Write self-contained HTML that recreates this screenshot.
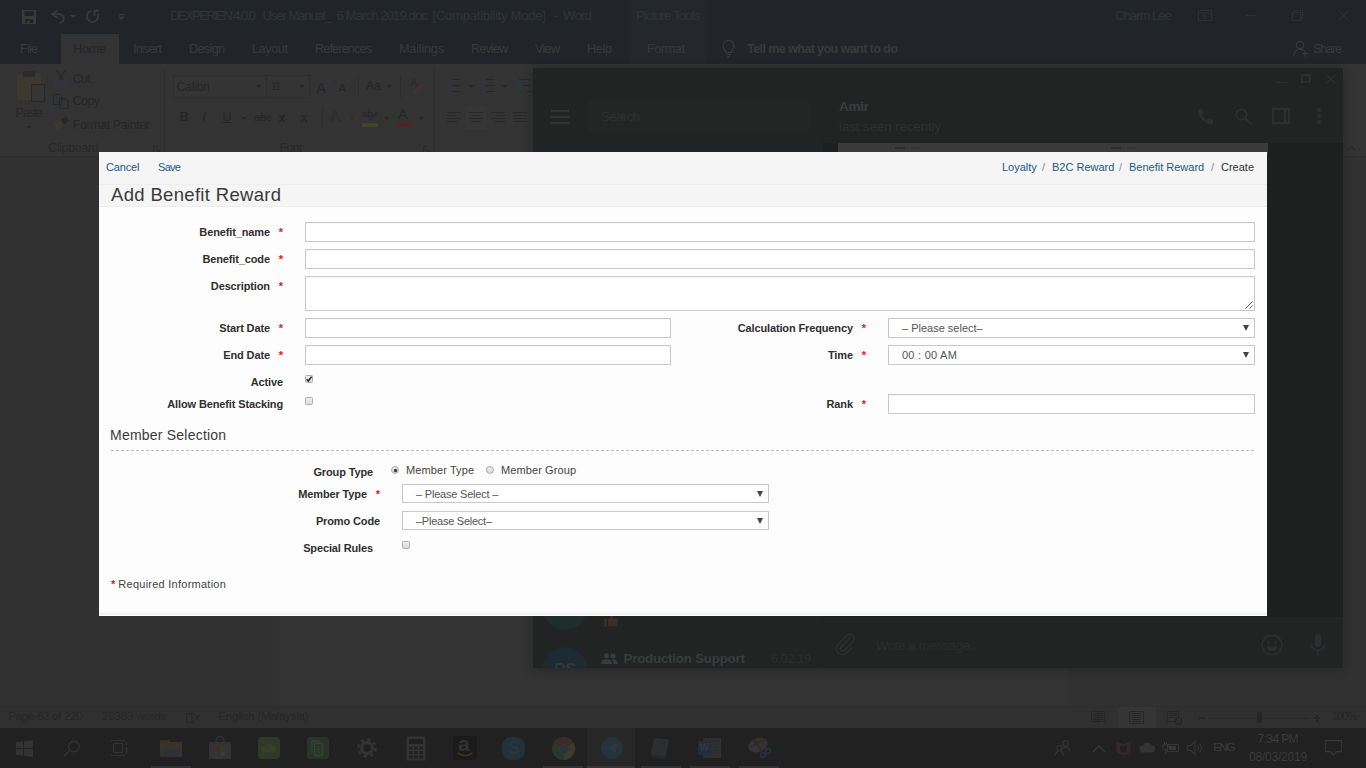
<!DOCTYPE html>
<html lang="en">
<head>
<meta charset="utf-8">
<title>Add Benefit Reward</title>
<style>
*{box-sizing:border-box;margin:0;padding:0}
html,body{width:1366px;height:768px;overflow:hidden;background:#333;font-family:"Liberation Sans",sans-serif}
.abs,.abs *{position:absolute}
#desk{position:absolute;left:0;top:0;width:1366px;height:768px;overflow:hidden;background:#333}
.t{white-space:nowrap;line-height:1}
/* ---------- Word (dimmed) ---------- */
#wtitle{left:0;top:0;width:1366px;height:64px;background:#21252a}
#wtitle .t{color:#373b42;font-size:12.5px}
#hometab{left:61px;top:34px;width:58px;height:31px;background:#333}
#pictools{left:629px;top:0;width:77px;height:64px;background:#24282d}
#ribbon{left:0;top:64px;width:1366px;height:93px;background:#333;border-bottom:1px solid #2e2e2e}
#ribbon .t{color:#262626;font-size:12.5px}
#ribbon .sep{width:1px;background:#2d2d2d;top:4px;height:86px}
#docarea{left:0;top:157px;width:1366px;height:549px;background:#313131}
#wpage{left:278px;top:157px;width:792px;height:549px;background:#333;border-left:1px solid #303030;border-right:1px solid #303030}
#status{left:0;top:706px;width:1366px;height:22px;background:#303030;border-top:1px solid #2e2e2e}
#status .t{color:#262626;font-size:11.5px;top:5px}
#taskbar{left:0;top:728px;width:1366px;height:40px;background:#212121}
#taskbar .t{color:#3a3a3a;font-size:12px}
/* ---------- Telegram (dimmed) ---------- */
#tg{left:533px;top:68px;width:810px;height:600px;overflow:hidden;background:#212423;box-shadow:0 2px 10px rgba(0,0,0,.25)}
#tgchat{left:289px;top:0;width:521px;height:600px;background:#1e2020;border-left:1px solid #1f2121}
#tghead{left:290px;top:0;width:520px;height:75px;background:#212423}
#tg .t{color:#323536}
/* ---------- Modal ---------- */
#modal{position:absolute;left:99px;top:152px;width:1168px;height:464px;background:#fdfdfd;color:#333;font-size:11px}
#mhead{position:absolute;left:0;top:0;width:1168px;height:55px;background:#f5f5f5;border-bottom:1px solid #ececec}
#mhead .line{position:absolute;left:0;top:32px;width:1168px;height:1px;background:#fafafa;border-top:1px solid #eee}
#mfoot{position:absolute;left:0;bottom:1px;width:1168px;height:4px;background:linear-gradient(#fbfbfb,#f0f0f0)}
#modal a{color:#1c5a85;text-decoration:none}
#modal .t{position:absolute}
.lbl{position:absolute;font-weight:bold;font-size:11px;color:#2f2f2f;text-align:right;white-space:nowrap;line-height:13px;letter-spacing:-0.13px}
.lbl i{font-style:normal;color:#e8141c;font-weight:bold;margin-left:6px}
.inp{position:absolute;background:#fff;border:1px solid #c9c9c9;box-shadow:inset 0 1px 1px rgba(0,0,0,.04)}
.sel{position:absolute;background:#fff;border:1px solid #c9c9c9;color:#555;font-size:11px;line-height:19px;white-space:nowrap}
.sel:after{content:"";position:absolute;right:5px;top:6px;border-left:3.5px solid transparent;border-right:3.5px solid transparent;border-top:6px solid #444}
.cb{position:absolute;width:8px;height:8px;border:1px solid #adadad;border-radius:1.5px;background:linear-gradient(#efefef,#dadada)}
.rd{position:absolute;width:8px;height:8px;border:1px solid #aaa;border-radius:50%;background:linear-gradient(#ececec,#d9d9d9)}
</style>
</head>
<body>
<div id="desk">

<!-- ================= WORD ================= -->
<div id="wtitle" class="abs">
  <div id="pictools"></div>
  <div id="hometab"></div>
  <!--QAT-->
  <svg style="left:22px;top:10px" width="14" height="14" viewBox="0 0 14 14"><path d="M0 0h14v14h-14z" fill="#3a3a3b"/><path d="M2.200 1.200h9.700v3.700l-1 1h-7.700l-1-1z M3.100 8.900h7.900v4h-3.500v-1.800h-2.200v1.800h-2.200z" fill="#21252a"/></svg>
  <svg style="left:50px;top:9px" width="17" height="16" viewBox="0 0 17 16"><path d="M7.700 1.300L1.800 5.200L7.700 9.100 M2 5.200H9.700a4.300 4.300 0 0 1 1.200 8.300L9 14" fill="none" stroke="#3a3a3b" stroke-width="1.800"/></svg>
  <svg style="left:70px;top:15px" width="6" height="3" viewBox="0 0 6 3"><path d="M0 0h6l-3 3z" fill="#3a3a3b"/></svg>
  <svg style="left:85px;top:9px" width="16" height="16" viewBox="0 0 16 16"><path d="M12.600 5.200A5.600 5.600 0 1 1 6.300 1.900" fill="none" stroke="#3a3a3b" stroke-width="1.800"/><path d="M9.500 6.800V1.700H14" fill="none" stroke="#3a3a3b" stroke-width="1.800"/></svg>
  <svg style="left:118px;top:14px" width="7" height="7" viewBox="0 0 7 7"><path d="M0.500 0.700h6" stroke="#3a3a3b" stroke-width="1.200"/><path d="M0 2.800h7l-3.500 3.200z" fill="#3a3a3b"/></svg>
  <!--/QAT-->
  <!--TITLE-->
  <span class="t" style="left:170.0px;top:9.4px;font-size:13.2px;color:#30343a;letter-spacing:-1.67px;">DEXPERIEN 4.0.0</span>
  <span class="t" style="left:262.5px;top:9.4px;font-size:13.2px;color:#30343a;letter-spacing:-1.15px;">User Manual_</span>
  <span class="t" style="left:336.5px;top:9.4px;font-size:13.2px;color:#30343a;letter-spacing:-0.94px;">6 March 2019.doc</span>
  <span class="t" style="left:432.5px;top:9.4px;font-size:13.2px;color:#30343a;letter-spacing:-0.32px;">[Compatibility Mode]</span>
  <span class="t" style="left:554.0px;top:9.4px;font-size:13.2px;color:#30343a;letter-spacing:-0.40px;">-</span>
  <span class="t" style="left:563.0px;top:9.4px;font-size:13.2px;color:#30343a;letter-spacing:-0.77px;">Word</span>
  <span class="t" style="left:636.0px;top:9.4px;font-size:13.2px;color:#30343a;letter-spacing:-0.94px;">Picture Tools</span>
  <span class="t" style="left:1115.0px;top:9.4px;font-size:13.2px;color:#30343a;letter-spacing:-1.04px;">Charm Lee</span>
  <svg style="left:1198px;top:10px" width="14" height="11" viewBox="0 0 14 11"><path d="M.5 .5h13v10H.5z M.5 3h13 M7 9V5 M5.3 6.5L7 4.8l1.7 1.7" fill="none" stroke="#2d3137" stroke-width="1"/></svg>
  <div style="left:1246px;top:15px;width:10px;height:1px;background:#2d3137"></div>
  <svg style="left:1292px;top:10px" width="11" height="11" viewBox="0 0 11 11"><path d="M.5 2.5h8v8h-8z M2.5 2.5v-2h8v8h-2" fill="none" stroke="#2d3137" stroke-width="1"/></svg>
  <svg style="left:1338px;top:10px" width="11" height="11" viewBox="0 0 11 11"><path d="M.5 .5l10 10 M10.5 .5l-10 10" fill="none" stroke="#2d3137" stroke-width="1"/></svg>
  <!--/TITLE-->
  <!--TABS-->
  <span class="t" style="left:20.0px;top:42.7px;font-size:12.6px;color:#3a3a3a;letter-spacing:-0.77px;">File</span>
  <span class="t" style="left:73.0px;top:42.7px;font-size:12.6px;color:#23262a;letter-spacing:-0.20px;">Home</span>
  <span class="t" style="left:133.0px;top:42.7px;font-size:12.6px;color:#3a3a3a;letter-spacing:-0.50px;">Insert</span>
  <span class="t" style="left:189.0px;top:42.7px;font-size:12.6px;color:#3a3a3a;letter-spacing:-0.64px;">Design</span>
  <span class="t" style="left:252.0px;top:42.7px;font-size:12.6px;color:#3a3a3a;letter-spacing:-0.37px;">Layout</span>
  <span class="t" style="left:315.0px;top:42.7px;font-size:12.6px;color:#3a3a3a;letter-spacing:-0.83px;">References</span>
  <span class="t" style="left:399.0px;top:42.7px;font-size:12.6px;color:#3a3a3a;letter-spacing:-0.17px;">Mailings</span>
  <span class="t" style="left:471.0px;top:42.7px;font-size:12.6px;color:#3a3a3a;letter-spacing:-0.86px;">Review</span>
  <span class="t" style="left:535.0px;top:42.7px;font-size:12.6px;color:#3a3a3a;letter-spacing:-0.69px;">View</span>
  <span class="t" style="left:587.0px;top:42.7px;font-size:12.6px;color:#3a3a3a;letter-spacing:-0.30px;">Help</span>
  <span class="t" style="left:647.0px;top:42.7px;font-size:12.6px;color:#3a3a3a;letter-spacing:-0.38px;">Format</span>
  <span class="t" style="left:747.0px;top:42.7px;font-size:12.6px;color:#3a3a3a;letter-spacing:-0.62px;font-weight:bold;">Tell me what you want to do</span>
  <span class="t" style="left:1313.0px;top:42.7px;font-size:12.6px;color:#3a3a3a;letter-spacing:-1.16px;">Share</span>
  <svg style="left:722px;top:40px" width="13" height="18" viewBox="0 0 13 18"><path d="M4 12.5c0-2-3-3.3-3-6.500a5.500 5.500 0 0 1 11 0c0 3.200-3 4.500-3 6.500z M4.300 14.700h4.400 M5 16.800h3" fill="none" stroke="#3a3a3a" stroke-width="1.200"/></svg>
  <svg style="left:1293px;top:40px" width="16" height="17" viewBox="0 0 16 17"><circle cx="7" cy="5" r="3.700" fill="none" stroke="#3a3a3a" stroke-width="1.200"/><path d="M.8 16c.3-4 2.500-6.500 6.200-6.500 1.200 0 2.300.3 3.100.9 M12 10.500v6 M9 13.500h6" fill="none" stroke="#3a3a3a" stroke-width="1.200"/></svg>
  <!--/TABS-->
</div>
<div id="ribbon" class="abs">
  <!--RIBBON-->
  <div style="left:17px;top:10px;width:24px;height:26px;background:#3e3930;border-radius:1px"></div>
  <div style="left:23px;top:7px;width:12px;height:6px;background:#2b2b2b;border-radius:2px 2px 0 0"></div>
  <div style="left:31px;top:20px;width:14px;height:18px;background:#353535;border:1px solid #282828"></div>
  <span class="t" style="left:15.4px;top:42.6px;font-size:12.4px;color:#262626;letter-spacing:-1.03px;">Paste</span>
  <svg style="left:26px;top:62px" width="6" height="3" viewBox="0 0 6 3"><path d="M0 0h6l-3 3z" fill="#262626"/></svg>
  <svg style="left:54px;top:6px" width="14" height="15" viewBox="0 0 14 15"><path d="M3 0.500L9.500 10.500 M11 0.500L4.500 10.500" stroke="#272727" stroke-width="1.300" fill="none"/><circle cx="3" cy="12" r="2.200" fill="none" stroke="#2c3946" stroke-width="1.100"/><circle cx="11" cy="12" r="2.200" fill="none" stroke="#2c3946" stroke-width="1.100"/></svg>
  <span class="t" style="left:72.7px;top:8.8px;font-size:12.4px;color:#262626;letter-spacing:-0.60px;">Cut</span>
  <svg style="left:53px;top:30px" width="16" height="15" viewBox="0 0 16 15"><path d="M.5 .5h6l2.500 2.500v7.500h-8.500z M6.500 4.500h6l2.500 2.500v7.500h-8.500z" fill="#333" stroke="#272727" stroke-width="1"/><path d="M2.500 4h3 M2.500 6h3 M8.500 9h4 M8.500 11h4" stroke="#2c3946" stroke-width="1"/></svg>
  <span class="t" style="left:72.7px;top:31.4px;font-size:12.4px;color:#262626;letter-spacing:-0.55px;">Copy</span>
  <svg style="left:53px;top:52px" width="17" height="15" viewBox="0 0 17 15"><path d="M1 8.500l6-4 3.500 5-6 4.500z" fill="#3f392c"/><path d="M8 3.800l5-3.300 3 4.500-5 3.300z" fill="#272727"/></svg>
  <span class="t" style="left:72.7px;top:54.6px;font-size:12.4px;color:#262626;letter-spacing:-0.36px;">Format Painter</span>
  <span class="t" style="left:48.4px;top:78.3px;font-size:12.4px;color:#292929;letter-spacing:-0.36px;">Clipboard</span>
  <svg style="left:153px;top:82px" width="7" height="7" viewBox="0 0 7 7"><path d="M.5 5.500v-5h5 M3 3l3.500 3.500 M6.500 4v2.500h-2.500" fill="none" stroke="#2a2a2a" stroke-width="1"/></svg>
  <div class="sep" style="left:164px"></div>
  <div style="left:173px;top:11px;width:94px;height:23px;border:1px solid #2d2d2d;background:#343434"></div>
  <div style="left:266px;top:11px;width:44px;height:23px;border:1px solid #2d2d2d;background:#343434"></div>
  <span class="t" style="left:176.4px;top:16.6px;font-size:12.6px;color:#262626;letter-spacing:-0.38px;">Calibri</span>
  <span class="t" style="left:270.7px;top:17.3px;font-size:11.8px;color:#262626;letter-spacing:-1.65px;">11</span>
  <svg style="left:256px;top:21px" width="6" height="3" viewBox="0 0 6 3"><path d="M0 0h6l-3 3z" fill="#262626"/></svg>
  <svg style="left:299px;top:21px" width="6" height="3" viewBox="0 0 6 3"><path d="M0 0h6l-3 3z" fill="#262626"/></svg>
  <span class="t" style="left:316.5px;top:16.7px;font-size:14px;color:#262626;letter-spacing:0.16px;">A</span>
  <svg style="left:326px;top:15px" width="5" height="3" viewBox="0 0 5 3"><path d="M0 3h5l-2.500-3z" fill="#2c3946"/></svg>
  <span class="t" style="left:338.5px;top:18.9px;font-size:11.5px;color:#262626;letter-spacing:-0.17px;">A</span>
  <svg style="left:346px;top:15px" width="5" height="3" viewBox="0 0 5 3"><path d="M0 0h5l-2.500 3z" fill="#2c3946"/></svg>
  <div class="sep" style="left:358px;top:12px;height:22px"></div>
  <span class="t" style="left:366.0px;top:16.2px;font-size:12.5px;color:#262626;letter-spacing:-0.29px;">Aa</span>
  <svg style="left:386px;top:21px" width="6" height="3" viewBox="0 0 6 3"><path d="M0 0h6l-3 3z" fill="#262626"/></svg>
  <div class="sep" style="left:400px;top:12px;height:22px"></div>
  <svg style="left:409px;top:14px" width="16" height="16" viewBox="0 0 16 16"><path d="M2 8L5 .8 8 8 M3 5.500h4" fill="none" stroke="#2b2b2b" stroke-width="1.200"/><path d="M6 12l6-7 3.500 3-6 7z" fill="#40302f"/><path d="M3.500 13l2-2.300 3.500 3-2 2.300z" fill="#3a3636"/></svg>
  <span class="t" style="left:179.5px;top:46.9px;font-size:12.5px;color:#262626;letter-spacing:-1.53px;font-weight:bold;">B</span>
  <span class="t" style="left:202.5px;top:46.5px;font-size:12.5px;font-style:italic;color:#262626">I</span>
  <span class="t" style="left:222.5px;top:46.5px;font-size:12.5px;text-decoration:underline;color:#262626">U</span>
  <svg style="left:241px;top:53px" width="6" height="3" viewBox="0 0 6 3"><path d="M0 0h6l-3 3z" fill="#262626"/></svg>
  <span class="t" style="left:254px;top:48px;font-size:11px;text-decoration:line-through;color:#262626">abc</span>
  <span class="t" style="left:278.5px;top:47.9px;font-size:12.5px;color:#262626;letter-spacing:-0.45px;font-weight:bold;">x</span>
  <span class="t" style="left:286px;top:56px;font-size:7px;color:#2c3946">2</span>
  <span class="t" style="left:300.5px;top:47.9px;font-size:12.5px;color:#262626;letter-spacing:-0.45px;font-weight:bold;">x</span>
  <span class="t" style="left:308px;top:45px;font-size:7px;color:#2c3946">2</span>
  <div class="sep" style="left:322px;top:43px;height:21px"></div>
  <span class="t" style="left:330.500px;top:44px;font-size:15px;color:#333;-webkit-text-stroke:1px #2e2e2e">A</span>
  <svg style="left:349px;top:53px" width="6" height="3" viewBox="0 0 6 3"><path d="M0 0h6l-3 3z" fill="#2d2d2d"/></svg>
  <span class="t" style="left:362px;top:44.500px;font-size:9.500px;color:#262626">ab</span>
  <svg style="left:368px;top:47px" width="11" height="11" viewBox="0 0 11 11"><path d="M1 10l1.500-3.500 6-6 2 2-6 6z" fill="#2b2b2b"/></svg>
  <div style="left:362px;top:59px;width:16px;height:4px;background:#454124"></div>
  <svg style="left:384px;top:53px" width="6" height="3" viewBox="0 0 6 3"><path d="M0 0h6l-3 3z" fill="#262626"/></svg>
  <span class="t" style="left:398.0px;top:43.4px;font-size:14.5px;color:#262626;letter-spacing:2.33px;">A</span>
  <div style="left:396px;top:59px;width:16px;height:4px;background:#4e2428"></div>
  <svg style="left:418px;top:53px" width="6" height="3" viewBox="0 0 6 3"><path d="M0 0h6l-3 3z" fill="#262626"/></svg>
  <span class="t" style="left:279.5px;top:78.3px;font-size:12.4px;color:#292929;letter-spacing:-0.64px;">Font</span>
  <svg style="left:423px;top:82px" width="7" height="7" viewBox="0 0 7 7"><path d="M.5 5.500v-5h5 M3 3l3.500 3.500 M6.500 4v2.500h-2.500" fill="none" stroke="#2a2a2a" stroke-width="1"/></svg>
  <div class="sep" style="left:434px"></div>
  <div style="left:447px;top:14px;width:3px;height:3px;border-radius:50%;background:#2c3946"></div>
  <div style="left:452px;top:15px;width:8px;height:1px;background:#272727"></div>
  <div style="left:447px;top:20px;width:3px;height:3px;border-radius:50%;background:#2c3946"></div>
  <div style="left:452px;top:21px;width:8px;height:1px;background:#272727"></div>
  <div style="left:447px;top:26px;width:3px;height:3px;border-radius:50%;background:#2c3946"></div>
  <div style="left:452px;top:27px;width:8px;height:1px;background:#272727"></div>
  <svg style="left:468px;top:21px" width="6" height="3" viewBox="0 0 6 3"><path d="M0 0h6l-3 3z" fill="#262626"/></svg>
  <span class="t" style="left:480.500px;top:12px;font-size:6.500px;font-weight:bold;color:#2c3946">1</span>
  <div style="left:486px;top:15px;width:9px;height:1px;background:#272727"></div>
  <span class="t" style="left:480.500px;top:18px;font-size:6.500px;font-weight:bold;color:#2c3946">2</span>
  <div style="left:486px;top:21px;width:9px;height:1px;background:#272727"></div>
  <span class="t" style="left:480.500px;top:24px;font-size:6.500px;font-weight:bold;color:#2c3946">3</span>
  <div style="left:486px;top:27px;width:9px;height:1px;background:#272727"></div>
  <svg style="left:502px;top:21px" width="6" height="3" viewBox="0 0 6 3"><path d="M0 0h6l-3 3z" fill="#262626"/></svg>
  <span class="t" style="left:513.500px;top:12px;font-size:6.500px;font-weight:bold;color:#2c3946">1</span><div style="left:519px;top:15px;width:11px;height:1px;background:#272727"></div>
  <span class="t" style="left:517.500px;top:18px;font-size:6.500px;font-weight:bold;color:#2c3946">a</span><div style="left:523px;top:21px;width:7px;height:1px;background:#272727"></div>
  <span class="t" style="left:521.500px;top:24px;font-size:6.500px;font-weight:bold;color:#2c3946">i</span><div style="left:526px;top:27px;width:5px;height:1px;background:#272727"></div>
  <div style="left:465px;top:42px;width:22px;height:23px;background:#363636"></div>
  <div style="left:447px;top:48px;width:14px;height:1px;background:#272727"></div><div style="left:447px;top:51px;width:10px;height:1px;background:#272727"></div><div style="left:447px;top:54px;width:14px;height:1px;background:#272727"></div><div style="left:447px;top:57px;width:10px;height:1px;background:#272727"></div>
  <div style="left:469px;top:48px;width:14px;height:1px;background:#272727"></div><div style="left:471px;top:51px;width:10px;height:1px;background:#272727"></div><div style="left:469px;top:54px;width:14px;height:1px;background:#272727"></div><div style="left:471px;top:57px;width:10px;height:1px;background:#272727"></div>
  <div style="left:491px;top:48px;width:14px;height:1px;background:#272727"></div><div style="left:495px;top:51px;width:10px;height:1px;background:#272727"></div><div style="left:491px;top:54px;width:14px;height:1px;background:#272727"></div><div style="left:495px;top:57px;width:10px;height:1px;background:#272727"></div>
  <div style="left:513px;top:48px;width:14px;height:1px;background:#272727"></div><div style="left:513px;top:51px;width:14px;height:1px;background:#272727"></div><div style="left:513px;top:54px;width:14px;height:1px;background:#272727"></div><div style="left:513px;top:57px;width:14px;height:1px;background:#272727"></div>
  <svg style="left:1347px;top:81px" width="9" height="6" viewBox="0 0 9 6"><path d="M.7 5.300L4.500 1.500 8.300 5.300" fill="none" stroke="#2a2a2a" stroke-width="1.400"/></svg>
  <!--/RIBBON-->
</div>
<div id="docarea" class="abs"></div>
<div id="wpage" class="abs"></div>
<div id="status" class="abs">
  <!--STATUS-->
  <span class="t" style="left:8.2px;top:3.1px;font-size:11.7px;color:#262626;letter-spacing:-0.36px;">Page 83 of 220</span>
  <span class="t" style="left:102.0px;top:3.1px;font-size:11.7px;color:#262626;letter-spacing:-0.27px;">29383 words</span>
  <span class="t" style="left:218.3px;top:3.1px;font-size:11.7px;color:#262626;letter-spacing:-0.31px;">English (Malaysia)</span>
  <svg style="left:186px;top:5px" width="15" height="12" viewBox="0 0 15 12"><path d="M.5 1.500h5.500v9h-5.500z M6 1.500h3 M6 10.500l2 0" fill="none" stroke="#262626" stroke-width="1"/><path d="M9 3l4 5 M13 3l-4 5" stroke="#262626" stroke-width="1.200"/></svg>
  <div style="left:1118px;top:0;width:38px;height:22px;background:#353535"></div>
  <svg style="left:1091px;top:4px" width="15" height="13" viewBox="0 0 15 13"><path d="M.5 .5h6.500v10h-6.500z M7 .5h6.500v10h-6.500z M7 10.500v2" fill="none" stroke="#262626" stroke-width="1"/><path d="M2 2.500h3.500M2 4.500h3.500M2 6.500h3.500M2 8.500h3.500M8.500 2.500h3.500M8.500 4.500h3.500M8.500 6.500h3.500M8.500 8.500h3.500" stroke="#262626" stroke-width="1"/></svg>
  <svg style="left:1129px;top:4px" width="15" height="13" viewBox="0 0 15 13"><path d="M.5 .5h14v12h-14z" fill="none" stroke="#262626" stroke-width="1"/><path d="M2.500 2.500h10M2.500 4.500h10M2.500 6.500h10M2.500 8.500h10M2.500 10.500h10" stroke="#262626" stroke-width="1"/></svg>
  <svg style="left:1167px;top:4px" width="16" height="14" viewBox="0 0 16 14"><path d="M.5 .5h11v10h-11z" fill="none" stroke="#262626" stroke-width="1"/><path d="M2 2.500h8M2 4.500h8M2 6.500h5" stroke="#262626" stroke-width="1"/><circle cx="11.500" cy="10" r="3.300" fill="#303030" stroke="#262626" stroke-width="1.100"/><path d="M9.200 8l4.500 4" stroke="#262626" stroke-width=".9"/></svg>
  <div style="left:1199px;top:10px;width:6px;height:2px;background:#262626"></div>
  <div style="left:1209px;top:11px;width:100px;height:1px;background:#2a2a2a"></div>
  <div style="left:1257px;top:5px;width:5px;height:11px;background:#262626"></div>
  <div style="left:1313px;top:10px;width:7px;height:2px;background:#262626"></div><div style="left:1315.500px;top:7.500px;width:2px;height:7px;background:#262626"></div>
  <span class="t" style="left:1331.4px;top:3.1px;font-size:11.7px;color:#262626;letter-spacing:-1.21px;">100%</span>
  <!--/STATUS-->
</div>
<div id="taskbar" class="abs">
  <!--TASKBAR-->
  <svg style="left:16px;top:12px" width="17" height="17" viewBox="0 0 17 17"><path d="M0 2.300L7 1.300v6.700H0z M8 1.200L17 0v8H8z M0 9h7v6.700L0 14.700z M8 9h9v8L8 15.800z" fill="#333333"/></svg>
  <svg style="left:63px;top:12px" width="18" height="17" viewBox="0 0 18 17"><circle cx="11" cy="6.500" r="5.300" fill="none" stroke="#333333" stroke-width="1.400"/><path d="M7 10.500L1 16" stroke="#333333" stroke-width="1.600"/></svg>
  <svg style="left:111px;top:12px" width="18" height="16" viewBox="0 0 18 16"><path d="M2.500 3.500h9v9h-9z M.5 1.500v-1h13v1 M.5 14.500v1h13v-1" fill="none" stroke="#333333" stroke-width="1.200"/><path d="M15.500 2v3 M15.500 7v7" stroke="#333333" stroke-width="1.400"/></svg>
  <div style="left:160px;top:12px;width:10px;height:4px;background:#353127;border-radius:1px 1px 0 0"></div><div style="left:160px;top:14px;width:22px;height:15px;background:#383328;border-radius:1px"></div><div style="left:164px;top:21px;width:14px;height:8px;background:#29323c"></div><div style="left:168px;top:25px;width:6px;height:4px;background:#353127"></div>
  <div style="left:151px;top:38px;width:40px;height:2px;background:#2d3339"></div>
  <svg style="left:208px;top:8px" width="24" height="24" viewBox="0 0 24 24"><path d="M8 7V4.500a4 4 0 0 1 8 0V7" fill="none" stroke="#313131" stroke-width="1.500"/><rect x="1" y="6" width="22" height="17" rx="1.500" fill="#333333"/><rect x="7" y="10" width="4.500" height="4.500" fill="#3f2c28"/><rect x="12.500" y="10" width="4.500" height="4.500" fill="#323c2c"/><rect x="7" y="15.500" width="4.500" height="4.500" fill="#293642"/><rect x="12.500" y="15.500" width="4.500" height="4.500" fill="#413c28"/></svg>
  <div style="left:258px;top:9px;width:22px;height:22px;border-radius:4px;background:#313827"></div><svg style="left:260px;top:15px" width="18" height="10" viewBox="0 0 18 10"><path d="M4 9.500a3 3 0 0 1 .3-6 4.500 4.500 0 0 1 8.500-.5 3.300 3.300 0 0 1 1 6.500z" fill="#393e2e"/></svg>
  <div style="left:307px;top:9px;width:22px;height:22px;border-radius:3px;background:#283427"></div><svg style="left:311px;top:12px" width="14" height="17" viewBox="0 0 14 17"><path d="M3.500 3.500h8v12h-8z M1 13V1h8" fill="none" stroke="#344134" stroke-width="1.400"/><path d="M5.500 7h4M5.500 9.500h4M5.500 12h4" stroke="#344134" stroke-width="1"/></svg>
  <svg style="left:357px;top:10px" width="20" height="20" viewBox="0 0 20 20"><circle cx="10" cy="10" r="5.500" fill="none" stroke="#333333" stroke-width="3.400"/><circle cx="10" cy="10" r="8.600" fill="none" stroke="#333333" stroke-width="2.600" stroke-dasharray="3.380 3.380"/></svg>
  <svg style="left:406px;top:8px" width="20" height="25" viewBox="0 0 20 25"><rect x=".5" y=".5" width="19" height="24" fill="#333333"/><rect x="3" y="3" width="14" height="5" fill="#212121"/><g fill="#212121"><rect x="3" y="10.500" width="3.500" height="3"/><rect x="8.200" y="10.500" width="3.500" height="3"/><rect x="13.500" y="10.500" width="3.500" height="3"/><rect x="3" y="15" width="3.500" height="3"/><rect x="8.200" y="15" width="3.500" height="3"/><rect x="13.500" y="15" width="3.500" height="3"/><rect x="3" y="19.500" width="3.500" height="3"/><rect x="8.200" y="19.500" width="3.500" height="3"/><rect x="13.500" y="19.500" width="3.500" height="3"/></g></svg>
  <div style="left:453px;top:8px;width:24px;height:24px;border-radius:3px;background:#1b1b1b"></div><span class="t" style="left:458px;top:5px;font-size:21px;font-weight:bold;color:#323232">a</span><svg style="left:457px;top:24px" width="16" height="5" viewBox="0 0 16 5"><path d="M.5 .8c4.500 3.500 10.500 3.500 15 0" fill="none" stroke="#403424" stroke-width="1.500"/></svg>
  <div style="left:502px;top:9px;width:23px;height:23px;border-radius:9px;background:#23313a"></div><span class="t" style="left:508px;top:11px;font-size:18px;font-weight:bold;color:#2e3538">S</span>
  <div style="left:552px;top:9px;width:23px;height:23px;border-radius:50%;background:conic-gradient(from -60deg,#3c2b29 0 120deg,#3d3c2a 120deg 240deg,#29372d 240deg 360deg)"></div><div style="left:558.500px;top:15.500px;width:10px;height:10px;border-radius:50%;background:#29333d;border:1.500px solid #353535"></div>
  <div style="left:543px;top:38px;width:40px;height:2px;background:#2d3339"></div>
  <div style="left:587px;top:0;width:48px;height:40px;background:#272727"></div><div style="left:587px;top:38px;width:48px;height:2px;background:#31383d"></div>
  <div style="left:601px;top:9px;width:22px;height:22px;border-radius:50%;background:#25333c"></div><svg style="left:605px;top:14px" width="13" height="12" viewBox="0 0 13 12"><path d="M.5 5.500L12.500 .5l-2 10.500-4-3-2 2-.3-3.300z" fill="#31383d"/></svg>
  <svg style="left:648px;top:8px" width="24" height="24" viewBox="0 0 24 24"><path d="M6 2l15 1.500-3 17-15-1.500z" fill="#2c2e30"/><path d="M3 18.500l15 2-1 2.500-15-2z" fill="#262929"/></svg>
  <div style="left:641px;top:38px;width:40px;height:2px;background:#2d3339"></div>
  <div style="left:703px;top:10px;width:18px;height:20px;background:#2f2f2f"></div><div style="left:698px;top:13px;width:13px;height:14px;background:#242d3e"></div><span class="t" style="left:699.500px;top:15px;font-size:10px;font-weight:bold;color:#353940">W</span><div style="left:713px;top:13px;width:6px;height:1px;background:#242d3e;box-shadow:0 3px 0 #242d3e,0 6px 0 #242d3e,0 9px 0 #242d3e,0 12px 0 #242d3e"></div>
  <div style="left:690px;top:38px;width:40px;height:2px;background:#2d3339"></div>
  <svg style="left:746px;top:8px" width="26" height="24" viewBox="0 0 26 24"><ellipse cx="12" cy="9" rx="10" ry="7" fill="#333333" transform="rotate(-20 12 9)"/><path d="M6 10l14-7 M8 4l10 14" stroke="#382727" stroke-width="1.500"/><circle cx="17" cy="19" r="2.500" fill="none" stroke="#26323f" stroke-width="1.500"/><circle cx="22" cy="15" r="2.500" fill="none" stroke="#26323f" stroke-width="1.500"/></svg>
  <div style="left:739px;top:38px;width:40px;height:2px;background:#2d3339"></div>
  <svg style="left:1055px;top:12px" width="16" height="16" viewBox="0 0 16 16"><circle cx="10.500" cy="3.500" r="2.800" fill="none" stroke="#373737" stroke-width="1.100"/><circle cx="4.500" cy="8" r="2.500" fill="none" stroke="#373737" stroke-width="1.100"/><path d="M.6 15.500c.3-3 1.700-4.700 3.900-4.700s3.600 1.700 3.900 4.700 M8 8.300c.8-.9 1.600-1.200 2.500-1.200 2.300 0 3.900 1.800 4.400 4.500" fill="none" stroke="#373737" stroke-width="1.100"/></svg>
  <svg style="left:1092px;top:17px" width="14" height="8" viewBox="0 0 14 8"><path d="M1 7L7 1l6 6" fill="none" stroke="#373737" stroke-width="1.300"/></svg>
  <svg style="left:1116px;top:12px" width="15" height="16" viewBox="0 0 15 16"><path d="M.5 1l7 3.500 7-3.500v11l-7 3.500-7-3.500z" fill="#34292a"/><path d="M4 5l3.500 1.800L11 5v6l-3.500 1.800L4 11z" fill="#212121"/></svg>
  <svg style="left:1139px;top:14px" width="17" height="11" viewBox="0 0 17 11"><path d="M4 10.500a3.500 3.500 0 0 1-.3-7A5 5 0 0 1 12.500 3a3.800 3.800 0 0 1 .7 7.500z" fill="#333333"/></svg>
  <svg style="left:1162px;top:13px" width="18" height="13" viewBox="0 0 18 13"><rect x="5.500" y="3.500" width="11" height="7" fill="none" stroke="#373737" stroke-width="1.100"/><rect x="7" y="5" width="7" height="4" fill="#373737"/><path d="M17 5.500v3 M2.500 1v3 M4.500 1v3 M1 4h5v2.500a2.500 2.500 0 0 1-5 0z M3.500 9v3.500" fill="none" stroke="#373737" stroke-width="1"/></svg>
  <svg style="left:1187px;top:12px" width="17" height="16" viewBox="0 0 17 16"><path d="M.7 5.500h3L8 1.500v13L3.700 10.500h-3z" fill="none" stroke="#373737" stroke-width="1.100"/><path d="M10.500 5.500a3.500 3.500 0 0 1 0 5 M12.500 3.500a6.300 6.300 0 0 1 0 9" fill="none" stroke="#373737" stroke-width="1"/><path d="M14.600 1.700a9 9 0 0 1 0 12.600" fill="none" stroke="#2a2a2a" stroke-width="1"/></svg>
  <span class="t" style="left:1213.3px;top:14.0px;font-size:11.5px;color:#3b3b3b;letter-spacing:-1.41px;">ENG</span>
  <span class="t" style="left:1257.6px;top:4.7px;font-size:12px;color:#3b3b3b;letter-spacing:-0.62px;">7:34 PM</span>
  <span class="t" style="left:1249.0px;top:22.7px;font-size:12px;color:#3b3b3b;letter-spacing:-0.21px;">08/03/2019</span>
  <svg style="left:1325px;top:12px" width="17" height="16" viewBox="0 0 17 16"><path d="M.6 .6h15.800v11h-5l-2.900 3.300-2.900-3.300h-5z" fill="none" stroke="#373737" stroke-width="1.100"/></svg>
  <!--/TASKBAR-->
</div>

<!-- ================= TELEGRAM ================= -->
<div id="tg" class="abs">
  <div id="tgchat"></div>
  <div id="tghead"></div>
  <!--TG-->
  <div style="left:744px;top:14px;width:10px;height:1px;background:#2c2e2f"></div>
  <div style="left:768px;top:6px;width:10px;height:9px;border:2px solid #2b2d2e"></div>
  <svg style="left:793px;top:6px" width="10" height="10" viewBox="0 0 10 10"><path d="M.7 .7l8.600 8.600M9.300 .7L.7 9.300" stroke="#2c2e2f" stroke-width="1.400"/></svg>
  <div style="left:18px;top:42px;width:18px;height:2px;background:#313334"></div>
  <div style="left:18px;top:48px;width:18px;height:2px;background:#313334"></div>
  <div style="left:18px;top:54px;width:18px;height:2px;background:#313334"></div>
  <div style="left:54px;top:33px;width:224px;height:30px;border-radius:3px;background:#232625"></div>
  <span class="t" style="left:68.0px;top:42.1px;font-size:13px;color:#2e3031;letter-spacing:-0.44px;">Search</span>
  <span class="t" style="left:306.0px;top:31.7px;font-size:13.5px;color:#3a3d3e;letter-spacing:-0.25px;font-weight:bold;">Amir</span>
  <span class="t" style="left:306.0px;top:52.1px;font-size:13px;color:#2e3132;letter-spacing:0.05px;">last seen recently</span>
  <svg style="left:664px;top:40px" width="17" height="17" viewBox="0 0 17 17"><path d="M1 1h4l1.500 4.500-2 1.500a10 10 0 0 0 5.500 5.500l1.500-2L16 12v4c-8 .5-15.500-7-15-15z" fill="#2d2f30"/></svg>
  <svg style="left:702px;top:40px" width="17" height="17" viewBox="0 0 17 17"><circle cx="6.500" cy="6.500" r="5.200" fill="none" stroke="#2d2f30" stroke-width="1.800"/><path d="M10.500 10.500l5.500 5.500" stroke="#2d2f30" stroke-width="2"/></svg>
  <div style="left:739px;top:40px;width:18px;height:16px;border:2px solid #2d2f30"></div><div style="left:751px;top:40px;width:2px;height:16px;background:#2d2f30"></div>
  <div style="left:784px;top:40px;width:4px;height:4px;border-radius:50%;background:#2d2f30"></div>
  <div style="left:784px;top:46px;width:4px;height:4px;border-radius:50%;background:#2d2f30"></div>
  <div style="left:784px;top:52px;width:4px;height:4px;border-radius:50%;background:#2d2f30"></div>
  <div style="left:0;top:75px;width:289px;height:60px;background:#1f2428"></div>
  <div style="left:305px;top:75px;width:430px;height:12px;background:#3a3a3a"></div>
  <div style="left:362px;top:79px;width:10px;height:2px;background:#2c2c2c"></div><div style="left:378px;top:79px;width:9px;height:2px;background:#343434"></div><div style="left:578px;top:79px;width:10px;height:2px;background:#2c2c2c"></div><div style="left:594px;top:79px;width:9px;height:2px;background:#343434"></div>
  <div style="left:10px;top:518px;width:44px;height:44px;border-radius:50%;background:#1f2d2c"></div>
  <div style="left:10px;top:579px;width:44px;height:44px;border-radius:50%;background:#1d2a33;overflow:hidden"><span class="t" style="left:11px;top:14px;font-size:17px;font-weight:bold;color:#2c3840">PS</span></div>
  <svg style="left:70px;top:545px" width="16" height="15" viewBox="0 0 16 15"><path d="M1 6h3v8H1z" fill="#362f29"/><path d="M5 6.500c2-1 3-3 3.200-5.500 2 0 2.300 2 1.500 4.500h5c1 0 1 1.500 0 2 .8.500.6 1.800-.3 2 .6.700.3 1.800-.5 2 .4.800 0 1.800-1 1.800H7.500L5 12.500z" fill="#38312a"/></svg>
  <svg style="left:68px;top:585px" width="17" height="11" viewBox="0 0 17 11"><circle cx="5.500" cy="2.800" r="2.500" fill="#393c3d"/><circle cx="12" cy="2.800" r="2.500" fill="#393c3d"/><path d="M0 11c0-3.500 2.500-4.800 5.500-4.800S11 7.500 11 11z M12 6.200c3 0 5 1.500 5 4.800h-4.500c0-2-.5-3.500-2-4.500.5-.2 1-.3 1.500-.3z" fill="#393c3d"/></svg>
  <span class="t" style="left:90.5px;top:583.5px;font-size:13.3px;color:#393c3d;letter-spacing:-0.20px;font-weight:bold;">Production Support</span>
  <span class="t" style="left:238.0px;top:585.4px;font-size:12.5px;color:#2c2f30;letter-spacing:-0.28px;">6.02.19</span>
  <div style="left:290px;top:549px;width:520px;height:51px;background:#212423"></div>
  <svg style="left:302px;top:565px" width="20" height="22" viewBox="0 0 20 22"><path d="M14.500 5.500L6 14a2.300 2.300 0 0 0 3.300 3.300L18 8.500a4.200 4.200 0 0 0-6-6L3 11.500a6 6 0 0 0 8.500 8.500l6-6" fill="none" stroke="#2c2e2f" stroke-width="1.700"/></svg>
  <span class="t" style="left:343.0px;top:571.1px;font-size:13px;color:#2b2d2e;letter-spacing:-0.24px;">Write a message...</span>
  <svg style="left:728px;top:566px" width="22" height="22" viewBox="0 0 22 22"><circle cx="11" cy="11" r="9.800" fill="none" stroke="#2c2e2f" stroke-width="1.800"/><circle cx="7.500" cy="8.500" r="1.400" fill="#2c2e2f"/><circle cx="14.500" cy="8.500" r="1.400" fill="#2c2e2f"/><path d="M5.500 12.500a5.700 5.700 0 0 0 11 0z" fill="#2c2e2f"/></svg>
  <svg style="left:777px;top:566px" width="16" height="22" viewBox="0 0 16 22"><rect x="4.800" y="0" width="6.400" height="13" rx="3.200" fill="#2c2e2f"/><path d="M1.500 10a6.500 6.500 0 0 0 13 0 M8 16.500V21" fill="none" stroke="#2c2e2f" stroke-width="1.700"/></svg>
  <!--/TG-->
</div>

<!-- ================= MODAL ================= -->
<div id="modal">
  <div id="mhead"><div class="line"></div></div>
  <div id="mfoot"></div>
  <a class="t" style="left:7px;top:10px;font-size:11px;letter-spacing:-.15px">Cancel</a>
  <a class="t" style="left:59px;top:10px;font-size:11px;letter-spacing:-.7px">Save</a>
  <div class="t" style="left:903px;top:10px;font-size:11px;color:#8a8a8a;word-spacing:0">
    <a style="position:absolute;left:0">Loyalty</a><span style="position:absolute;left:40px">/</span>
    <a style="position:absolute;left:50px">B2C Reward</a><span style="position:absolute;left:117px">/</span>
    <a style="position:absolute;left:127px">Benefit Reward</a><span style="position:absolute;left:209px">/</span>
    <span style="position:absolute;left:219px;color:#333">Create</span>
  </div>
  <div class="t" style="left:12px;top:34px;font-size:18.5px;color:#3a3a3a;letter-spacing:.33px">Add Benefit Reward</div>

  <div class="lbl" style="right:984px;top:74px">Benefit_name <i>*</i></div>
  <div class="inp" style="left:206px;top:70px;width:950px;height:20px"></div>
  <div class="lbl" style="right:984px;top:101px">Benefit_code <i>*</i></div>
  <div class="inp" style="left:206px;top:97px;width:950px;height:20px"></div>
  <div class="lbl" style="right:984px;top:128px">Description <i>*</i></div>
  <div class="inp" style="left:206px;top:124px;width:950px;height:35px">
    <svg style="position:absolute;right:1px;bottom:1px" width="8" height="8" viewBox="0 0 8 8"><path d="M7.5 0.5L0.5 7.5M7.5 4.5L4.5 7.5" stroke="#666" stroke-width="1" fill="none"/></svg>
  </div>

  <div class="lbl" style="right:984px;top:170px">Start Date <i>*</i></div>
  <div class="inp" style="left:206px;top:166px;width:366px;height:20px"></div>
  <div class="lbl" style="right:984px;top:197px">End Date <i>*</i></div>
  <div class="inp" style="left:206px;top:193px;width:366px;height:20px"></div>
  <div class="lbl" style="right:984px;top:224px">Active</div>
  <div class="cb" style="left:206px;top:223px"><svg style="position:absolute;left:-1px;top:-1px" width="8" height="8" viewBox="0 0 8 8"><path d="M1.7 4.2L3.3 6L6.6 1.6" stroke="#222" stroke-width="1.5" fill="none"/></svg></div>
  <div class="lbl" style="right:984px;top:246px">Allow Benefit Stacking</div>
  <div class="cb" style="left:206px;top:245px"></div>

  <div class="lbl" style="right:401px;top:170px">Calculation Frequency <i>*</i></div>
  <div class="sel" style="left:789px;top:166px;width:367px;height:20px;padding-left:13px">&ndash; Please select&ndash;</div>
  <div class="lbl" style="right:401px;top:197px">Time <i>*</i></div>
  <div class="sel" style="left:789px;top:193px;width:367px;height:20px;padding-left:13px;letter-spacing:.25px">00 : 00 AM</div>
  <div class="lbl" style="right:401px;top:246px">Rank <i>*</i></div>
  <div class="inp" style="left:789px;top:242px;width:367px;height:20px"></div>

  <div class="t" style="left:11px;top:276px;font-size:14px;color:#3a3a3a;letter-spacing:.22px">Member Selection</div>
  <div style="position:absolute;left:12px;top:298px;width:1144px;height:1px;background:repeating-linear-gradient(90deg,#bdbdbd 0 3px,transparent 3px 5px)"></div>

  <div class="lbl" style="right:894px;top:314px">Group Type</div>
  <div class="rd" style="left:292px;top:314px"><span style="position:absolute;left:1.5px;top:1.5px;width:3px;height:3px;border-radius:50%;background:#3a3a3a;box-shadow:0 0 1px #3a3a3a"></span></div>
  <div class="t" style="left:307px;top:313px;font-size:11px;color:#444;letter-spacing:.1px">Member Type</div>
  <div class="rd" style="left:387px;top:314px"></div>
  <div class="t" style="left:402px;top:313px;font-size:11px;color:#444;letter-spacing:.1px">Member Group</div>

  <div class="lbl" style="right:887px;top:336px">Member Type <i>*</i></div>
  <div class="sel" style="left:303px;top:332px;width:367px;height:19px;padding-left:13px;letter-spacing:-.2px">&ndash; Please Select &ndash;</div>
  <div class="lbl" style="right:887px;top:363px">Promo Code</div>
  <div class="sel" style="left:303px;top:359px;width:367px;height:19px;padding-left:13px;letter-spacing:-.25px">&ndash;Please Select&ndash;</div>
  <div class="lbl" style="right:894px;top:390px">Special Rules</div>
  <div class="cb" style="left:303px;top:389px"></div>

  <div class="t" style="left:12px;top:427px;font-size:11px;color:#444"><b style="color:#e8141c">*</b> <span style="letter-spacing:.25px">Required Information</span></div>
</div>

</div>
</body>
</html>
